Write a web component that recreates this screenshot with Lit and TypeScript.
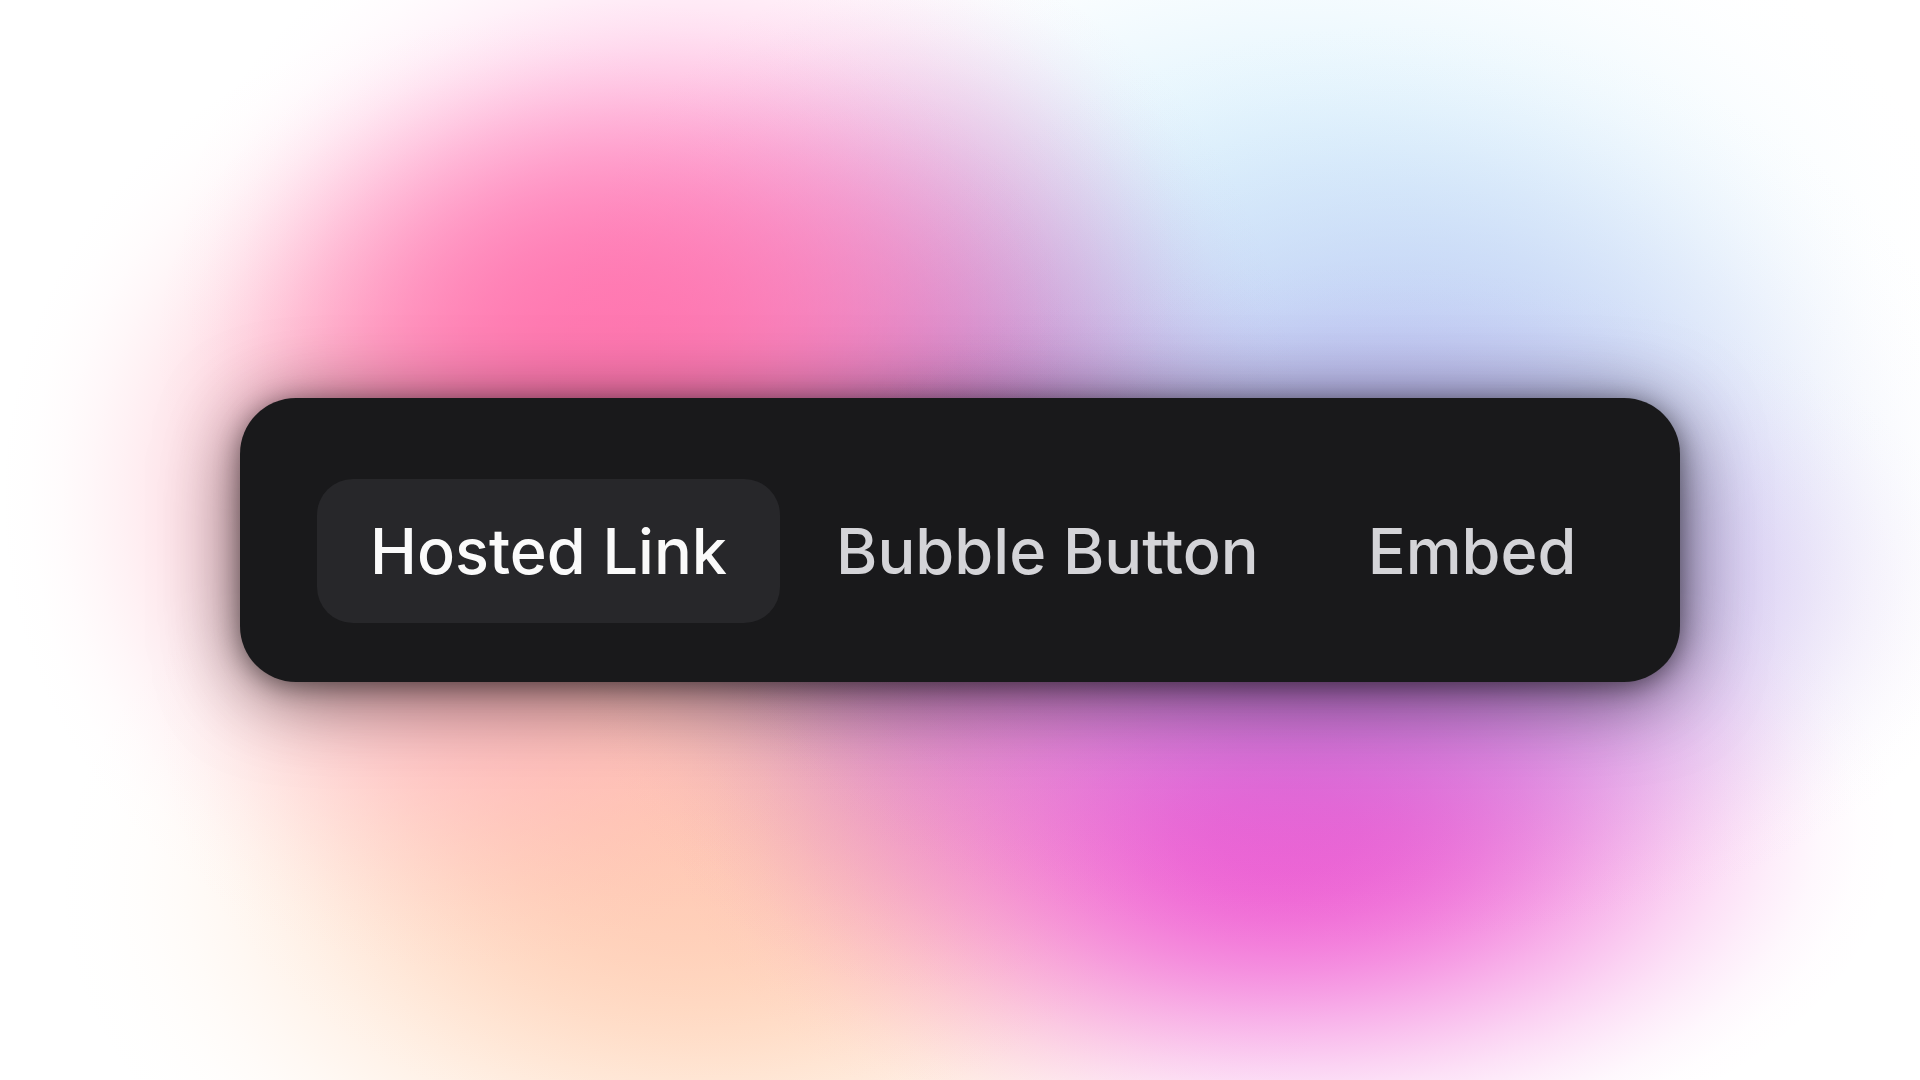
import { LitElement, html, css, unsafeCSS } from "lit";
import { customElement, state } from "lit/decorators.js";
import { classMap } from "lit/directives/class-map.js";

interface Glow {
  rgb: string;
  x: number;
  y: number;
  rx: number;
  ry: number;
  core: number;
  alpha: number;
}

// Colour glows, front to back. Centres and radii are percentages of the stage.
const GLOWS: Glow[] = [
  { rgb: "182, 118, 220", x: 70, y: 56, rx: 34, ry: 32, core: 0.05, alpha: 0.6 },
  { rgb: "240, 92, 210", x: 67, y: 77, rx: 32, ry: 33, core: 0.05, alpha: 0.96 },
  { rgb: "255, 108, 168", x: 32, y: 32, rx: 24, ry: 32, core: 0.04, alpha: 0.8 },
  { rgb: "255, 140, 205", x: 36, y: 24, rx: 27, ry: 36, core: 0.04, alpha: 0.65 },
  { rgb: "186, 118, 196", x: 48, y: 44, rx: 20, ry: 48, core: 0.05, alpha: 0.85 },
  { rgb: "255, 172, 190", x: 24, y: 46, rx: 24, ry: 44, core: 0.1, alpha: 0.85 },
  { rgb: "255, 184, 170", x: 36, y: 66, rx: 28, ry: 40, core: 0.1, alpha: 0.6 },
  { rgb: "255, 211, 178", x: 37, y: 82, rx: 34, ry: 40, core: 0.1, alpha: 0.8 },
  { rgb: "186, 198, 242", x: 73, y: 46, rx: 31, ry: 44, core: 0.1, alpha: 0.88 },
  { rgb: "212, 239, 252", x: 68, y: 24, rx: 34, ry: 37, core: 0.1, alpha: 0.8 },
];

// Eases each glow out along a cosine curve so that no ring is visible.
const glowLayer = (g: Glow): string => {
  const steps = 14;
  const stops: string[] = [];
  for (let i = 0; i <= steps; i++) {
    const t = i / steps;
    const a = (g.alpha * (1 + Math.cos(Math.PI * t))) / 2;
    const at = (g.core + (1 - g.core) * t) * 100;
    stops.push(`rgba(${g.rgb}, ${a.toFixed(4)}) ${at.toFixed(2)}%`);
  }
  return `radial-gradient(${g.rx}% ${g.ry}% at ${g.x}% ${g.y}%, ${stops.join(", ")})`;
};

const TABS = ["Hosted Link", "Bubble Button", "Embed"];

@customElement("app-root")
export class AppRoot extends LitElement {
  @state() private active = 0;

  static styles = css`
    :host {
      display: block;
    }
    .stage {
      display: flex;
      align-items: center;
      justify-content: center;
      min-height: 100vh;
      background: ${unsafeCSS(GLOWS.map(glowLayer).join(", "))}, #fff;
    }
    .bar {
      box-sizing: border-box;
      display: flex;
      gap: 3px;
      width: 75%;
      padding: 81px 48px 59px 77px;
      border-radius: 56px;
      background: #19191b;
      box-shadow: 0 4px 24px rgba(0, 0, 0, 0.4), 0 12px 80px rgba(0, 0, 0, 0.6);
    }
    .tab {
      padding: 32px 53px;
      border: 0;
      border-radius: 36px;
      background: transparent;
      color: #d4d4d8;
      font: 500 63px/80px Inter, "Liberation Sans", sans-serif;
      white-space: nowrap;
      cursor: pointer;
    }
    .tab.active {
      background: #27272a;
      color: #fafafa;
    }
  `;

  render() {
    return html`
      <main class="stage">
        <div class="bar" role="tablist">
          ${TABS.map(
            (label, i) => html`
              <button
                class=${classMap({ tab: true, active: i === this.active })}
                type="button"
                role="tab"
                aria-selected=${i === this.active ? "true" : "false"}
                @click=${() => (this.active = i)}
              >${label}</button>
            `
          )}
        </div>
      </main>
    `;
  }
}
